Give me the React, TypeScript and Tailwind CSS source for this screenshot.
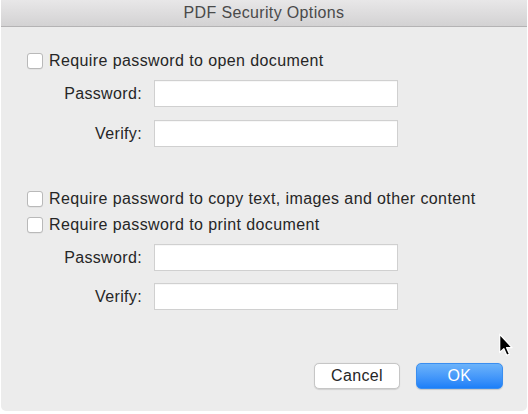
import React from 'react';

const font = { fontFamily: '"Liberation Sans", Arial, sans-serif' };

const Checkbox: React.FC<{ label: string }> = ({ label }) => (
  <label className="flex items-center h-[20px] ml-[26px] gap-[6px] text-[16px] tracking-[0.4px] text-[#262626]">
    <span className="w-[16px] h-[16px] rounded-[3px] bg-white border border-[#b9b9b9] shadow-[0_0.5px_0.5px_rgba(0,0,0,0.08)] shrink-0" />
    <span>{label}</span>
  </label>
);

const Field: React.FC<{ label: string; className?: string }> = ({ label, className = '' }) => (
  <div className={`flex items-center gap-[12px] ${className}`}>
    <div className="w-[141px] text-right text-[16px] tracking-[0.35px] text-[#262626]">{label}</div>
    <div className="w-[244px] h-[27px] bg-white border border-[#d0d0d0] shadow-[inset_0_1px_0_rgba(0,0,0,0.03)]" />
  </div>
);

export default function App() {
  return (
    <div className="w-[528px] h-[414px] bg-white relative overflow-hidden" style={font}>
      <div className="ml-[1px] w-[526px] h-[411px] bg-[#ececec] rounded-b-[5px] flex flex-col">
        {/* Title bar */}
        <div className="h-[27px] shrink-0 bg-gradient-to-b from-[#e8e7e8] to-[#d3d2d3] border-b border-[#b4b3b4] flex items-center justify-center">
          <span className="text-[16px] tracking-[0.35px] text-[#4a4a4a] -mt-[1px]">PDF Security Options</span>
        </div>

        <div className="flex flex-col pt-[24px]">
          <Checkbox label="Require password to open document" />
          <Field label="Password:" className="mt-[9px]" />
          <Field label="Verify:" className="mt-[13px]" />

          <div className="mt-[42px]">
            <Checkbox label="Require password to copy text, images and other content" />
          </div>
          <div className="mt-[6px]">
            <Checkbox label="Require password to print document" />
          </div>
          <Field label="Password:" className="mt-[9px]" />
          <Field label="Verify:" className="mt-[12px]" />

          <div className="flex justify-end gap-[16px] pr-[24px] mt-[53px]">
            <button className="w-[86px] h-[26px] rounded-[5px] bg-white border border-[#c6c6c6] shadow-[0_0.5px_1px_rgba(0,0,0,0.12)] text-[16px] tracking-[0.35px] text-[#262626]">
              Cancel
            </button>
            <button className="w-[87px] h-[26px] rounded-[5px] bg-gradient-to-b from-[#6cb3fa] to-[#1c7ff8] border border-[#3a8ef0] shadow-[0_0.5px_1px_rgba(0,0,0,0.15)] text-[16px] tracking-[0.35px] text-white">
              OK
            </button>
          </div>
        </div>
      </div>

      {/* mouse pointer */}
      <svg className="absolute left-[498px] top-[333px]" width="16" height="24" viewBox="0 0 12 19">
        <path d="M1 1 L1 15.5 L4.3 12.4 L6.6 17.6 L8.7 16.7 L6.5 11.6 L10.8 11.6 Z" fill="#000" stroke="#fff" strokeWidth="1" strokeLinejoin="round" />
      </svg>
    </div>
  );
}
